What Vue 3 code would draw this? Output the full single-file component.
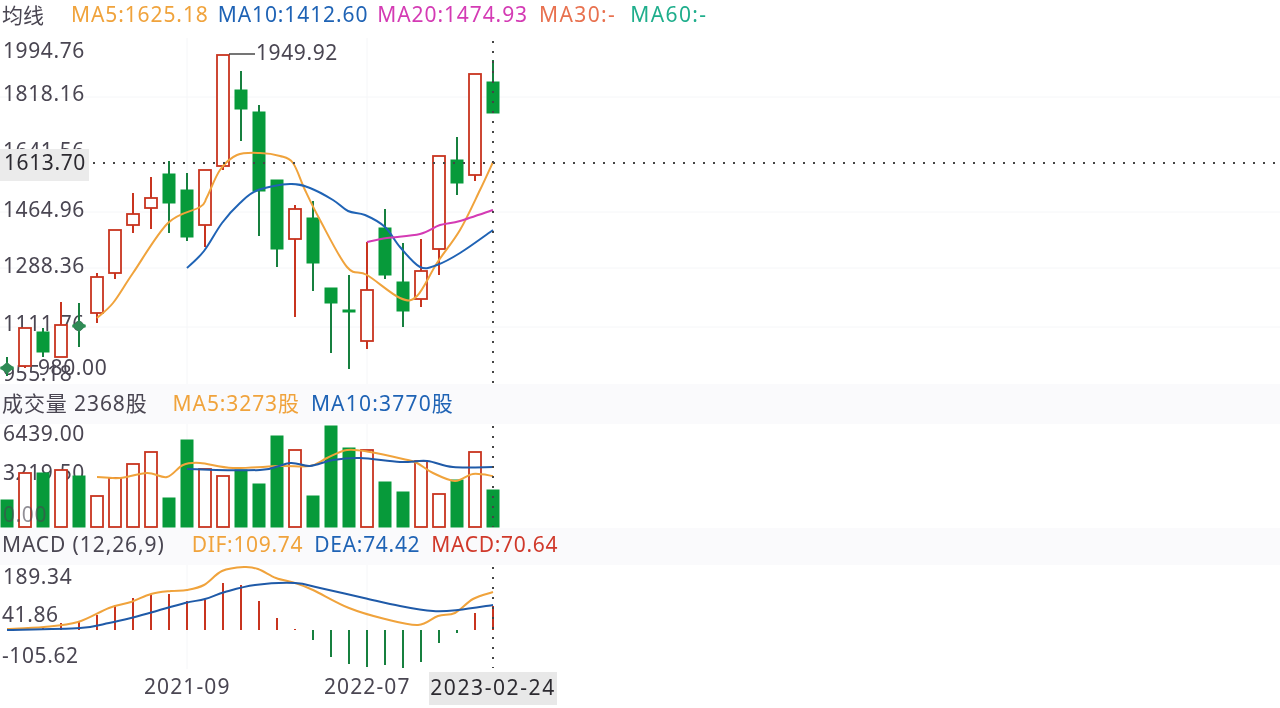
<template>
  <div class="page">
    <div class="legend top">
      <span class="name">均线</span>
      <span v-for="m in priceLegend" :key="m.text" :style="{ color: m.color }">{{ m.text }}</span>
    </div>
    <svg class="pane" width="1280" height="346" viewBox="0 38 1280 346">
      <line v-for="y in [97, 212, 268, 327]" :key="y" class="grid" x1="0" x2="1280" :y1="y" :y2="y" />
      <line v-for="x in [187, 367]" :key="x" class="grid" :x1="x" :x2="x" y1="38" y2="384" />
      <text v-for="t in priceAxis" :key="t.label" class="axis" :x="t.x" :y="t.y">{{ t.label }}</text>

      <g v-for="c in candles" :key="c.x">
        <line :class="c.up ? 'red' : 'green'" :x1="c.x" :x2="c.x" :y1="c.hi" :y2="c.lo" />
        <rect :class="c.up ? 'hollow' : 'solid'" :x="c.x - 6" :y="c.top" width="12" :height="c.bot - c.top" />
      </g>
      <polygon class="doji" points="7,362 14,368 7,374 0,368" />
      <polygon class="doji" points="79,320 86,326 79,332 72,326" />
      <path class="ma" stroke="#f0a33c" :d="smooth(ma5)" />
      <path class="ma" stroke="#1f63b5" :d="smooth(ma10)" />
      <path class="ma" stroke="#d43bb4" :d="smooth(ma20)" />

      <polyline class="leader" points="229,54 255,54" />
      <text class="axis" x="256" y="60">1949.92</text>
      <line class="cross" x1="93" x2="1276" y1="163" y2="163" />
      <line class="cross" x1="493" x2="493" y1="41" y2="384" />
      <rect class="tag" x="0" y="149" width="89" height="32" />
      <text class="axis dark" x="4" y="170">1613.70</text>
    </svg>

    <div class="legend band">
      <span class="name">成交量 2368股</span>
      <span class="gap" style="color: #f0a33c">MA5:3273股</span>
      <span class="wide" style="color: #1f63b5">MA10:3770股</span>
    </div>
    <svg class="pane" width="1280" height="104" viewBox="0 424 1280 104">
      <line v-for="x in [187, 367]" :key="x" class="grid" :x1="x" :x2="x" y1="424" y2="528" />
      <text class="axis" x="3" y="441">6439.00</text>
      <text class="axis" x="3" y="480">3219.50</text>
      <g v-for="b in volumes" :key="b.x">
        <rect :class="b.up ? 'hollow' : 'solid'" :x="b.x - 6" :y="b.top" width="12" :height="527 - b.top" />
      </g>
      <text class="axis faded" x="3" y="522">0.00</text>
      <path class="ma" stroke="#f0a33c" :d="smooth(volMa5)" />
      <path class="ma" stroke="#1f5aa8" :d="smooth(volMa10)" />
      <line class="cross" x1="493" x2="493" y1="426" y2="527" />
    </svg>

    <div class="legend band thin">
      <span class="name">MACD (12,26,9)</span>
      <span class="gap" style="color: #f0a33c">DIF:109.74</span>
      <span style="color: #1f63b5">DEA:74.42</span>
      <span style="color: #d0392b">MACD:70.64</span>
    </div>
    <svg class="pane" width="1280" height="104" viewBox="0 565 1280 104">
      <line v-for="x in [187, 367]" :key="x" class="grid" :x1="x" :x2="x" y1="565" y2="669" />
      <text class="axis" x="3" y="584">189.34</text>
      <text class="axis" x="2" y="622">41.86</text>
      <text class="axis" x="2" y="663">-105.62</text>
      <line v-for="b in histogram" :key="b.x" :class="b.y < 630 ? 'red' : 'green'" :x1="b.x" :x2="b.x" y1="630" :y2="b.y" />
      <path class="ma" stroke="#f0a33c" :d="smooth(dif)" />
      <path class="ma" stroke="#1f5aa8" :d="smooth(dea)" />
      <line class="cross" x1="493" x2="493" y1="567" y2="668" />
    </svg>

    <div class="dates">
      <span class="date first">2021-09</span>
      <span class="date second">2022-07</span>
      <span class="date current">2023-02-24</span>
    </div>
  </div>
</template>

<script setup>
const priceLegend = [
  { text: 'MA5:1625.18', color: '#f0a33c' },
  { text: 'MA10:1412.60', color: '#1f63b5' },
  { text: 'MA20:1474.93', color: '#d43bb4' },
  { text: 'MA30:-', color: '#e8714f' },
  { text: 'MA60:-', color: '#1fae8c' }
]

const priceAxis = [
  { label: '1994.76', x: 3, y: 58 },
  { label: '1818.16', x: 3, y: 101 },
  { label: '1641.56', x: 3, y: 158 },
  { label: '1464.96', x: 3, y: 217 },
  { label: '1288.36', x: 3, y: 273 },
  { label: '1111.76', x: 3, y: 331 },
  { label: '955.18', x: 3, y: 381 },
  { label: '980.00', x: 38, y: 375 }
]

// up, body top, body bottom, wick top, wick bottom
const raw = [
  [0, 367, 369, 357, 376], [1, 328, 366, 328, 368], [0, 332, 352, 328, 357], [1, 325, 357, 302, 331],
  [0, 325, 327, 303, 347], [1, 277, 313, 273, 323], [1, 230, 273, 230, 279], [1, 214, 225, 193, 233],
  [1, 198, 208, 177, 229], [0, 174, 203, 161, 233], [0, 190, 237, 173, 241], [1, 170, 225, 170, 247],
  [1, 55, 166, 55, 170], [0, 90, 109, 71, 141], [0, 112, 191, 105, 236], [0, 180, 249, 180, 267],
  [1, 209, 239, 205, 317], [0, 218, 263, 201, 291], [0, 288, 303, 288, 353], [0, 310, 312, 275, 369],
  [1, 290, 341, 242, 349], [0, 228, 275, 209, 279], [0, 282, 311, 243, 327], [1, 271, 299, 239, 307],
  [1, 156, 249, 156, 275], [0, 160, 183, 137, 195], [1, 74, 175, 74, 181], [0, 82, 113, 60, 113]
]
const candles = raw.map((r, i) => ({ x: 7 + i * 18, up: r[0] === 1, top: r[1], bot: r[2], hi: r[3], lo: r[4] }))

const volUp = [0, 1, 0, 1, 0, 1, 1, 1, 1, 0, 0, 1, 1, 0, 0, 0, 1, 0, 0, 0, 1, 0, 0, 1, 1, 0, 1, 0]
const volTops = [500, 473, 473, 470, 476, 496, 478, 464, 452, 498, 440, 469, 476, 470, 484, 436, 450, 496, 426, 448, 450, 482, 492, 461, 494, 480, 452, 490]
const volumes = volTops.map((top, i) => ({ x: 7 + i * 18, top, up: volUp[i] === 1 }))

const histY = [null, 628, 627, 623, 622, 615, 605, 598, 595, 594, 601, 600, 583, 585, 601, 618, 629, 640, 657, 664, 667, 665, 668, 662, 643, 633, 613, 606]
const histogram = histY.map((y, i) => ({ x: 7 + i * 18, y })).filter(b => b.y !== null)

const ma5 = '97,318 113,303 133,273 168,223 200,207 207,197 220,170 237,155 260,153 280,156 293,163 305,190 320,220 347,267 367,275 400,298 417,296 437,263 460,230 480,190 493,162'
const ma10 = '187,268 204,251 222,223 240,203 258,190 290,184 310,188 333,200 348,211 365,215 385,227 400,247 420,267 437,265 460,253 493,230'
const ma20 = '367,242 387,238 420,234 440,225 460,221 493,210'
const volMa5 = '97,477 120,478 147,473 167,477 183,465 200,463 233,468 280,466 310,466 327,458 347,450 370,452 403,459 417,463 433,473 455,481 473,474 493,476'
const volMa10 = '187,469 260,470 290,463 310,466 333,460 360,458 400,462 427,461 453,467 493,467'
const dif = '7,629 44,627 78,622 109,608 131,602 151,594 171,591 187,590 204,585 222,571 244,567 258,569 276,578 295,583 313,590 349,608 385,619 418,625 438,616 455,613 473,599 493,592'
const dea = '7,630 80,628 109,623 131,618 153,612 185,603 205,599 225,592 255,585 295,583 320,588 364,598 400,606 433,611 458,610 493,605'

// catmull-rom through the points, same look as a smoothed chart line
function smooth(str) {
  const p = str.split(' ').map(s => s.split(',').map(Number))
  let d = `M${p[0][0]} ${p[0][1]}`
  for (let i = 0; i < p.length - 1; i++) {
    const a = p[i - 1] || p[i]
    const b = p[i]
    const c = p[i + 1]
    const e = p[i + 2] || c
    const c1x = b[0] + (c[0] - a[0]) / 6
    const c1y = b[1] + (c[1] - a[1]) / 6
    const c2x = c[0] - (e[0] - b[0]) / 6
    const c2y = c[1] - (e[1] - b[1]) / 6
    d += ` C${c1x} ${c1y} ${c2x} ${c2y} ${c[0]} ${c[1]}`
  }
  return d
}
</script>

<style scoped>
.page {
  width: 1280px;
  height: 708px;
  overflow: hidden;
  background: #fff;
  font-family: "Noto Sans", "Noto Sans CJK SC", sans-serif;
  font-size: 21px;
  letter-spacing: 0.9px;
  filter: blur(0.35px);
}

.legend {
  display: flex;
  align-items: center;
  gap: 9px;
  padding-left: 2px;
  white-space: nowrap;
}
.legend .name {
  color: #4a4652;
}
.legend.top {
  height: 38px;
  padding-bottom: 10px;
  box-sizing: border-box;
}
.legend.top .name {
  margin-right: 18px;
  letter-spacing: 0;
}
.legend.top span:nth-child(5) {
  margin-left: 2px;
  letter-spacing: 1.4px;
}
.legend.top span:nth-child(6) {
  margin-left: 5px;
  letter-spacing: 1.4px;
}
.legend.band {
  height: 40px;
  padding-bottom: 4px;
  box-sizing: border-box;
  background: #fafafc;
}
.legend.band.thin {
  height: 37px;
  padding-bottom: 6px;
  gap: 11px;
}
.legend.thin span:not(.name) {
  letter-spacing: 0.7px;
}
.legend .gap {
  margin-left: 16px;
}
.legend .wide {
  margin-left: 2px;
  letter-spacing: 1.2px;
}

.pane {
  display: block;
}
.grid {
  stroke: #f5f6f8;
  stroke-width: 1;
}
.axis {
  font-size: 21px;
  letter-spacing: 0.6px;
  fill: #4a4652;
}
.axis.dark {
  fill: #2c2a30;
}
.axis.faded {
  opacity: 0.6;
}
.red {
  stroke: #c8341f;
  stroke-width: 2;
}
.green {
  stroke: #17803f;
  stroke-width: 2;
}
.hollow {
  fill: #fff;
  stroke: #c8341f;
  stroke-width: 1.8;
}
.solid {
  fill: #079a3a;
  stroke: #079a3a;
  stroke-width: 1;
}
.doji {
  fill: #2f8a55;
}
.ma {
  fill: none;
  stroke-width: 2;
}
.leader {
  fill: none;
  stroke: #3a3a3a;
  stroke-width: 1.4;
}
.cross {
  stroke: #444;
  stroke-width: 2;
  stroke-dasharray: 2 8;
}
.tag {
  fill: #ebebeb;
}

.dates {
  position: relative;
  height: 39px;
  color: #4a4652;
  letter-spacing: 1.1px;
}
.date {
  position: absolute;
  top: 3px;
}
.first {
  left: 144px;
}
.second {
  left: 324px;
}
.current {
  left: 429px;
  top: 3px;
  width: 128px;
  height: 33px;
  line-height: 30px;
  text-align: center;
  letter-spacing: 1.6px;
  color: #2c2a30;
  background: #e8e8e8;
}
</style>
